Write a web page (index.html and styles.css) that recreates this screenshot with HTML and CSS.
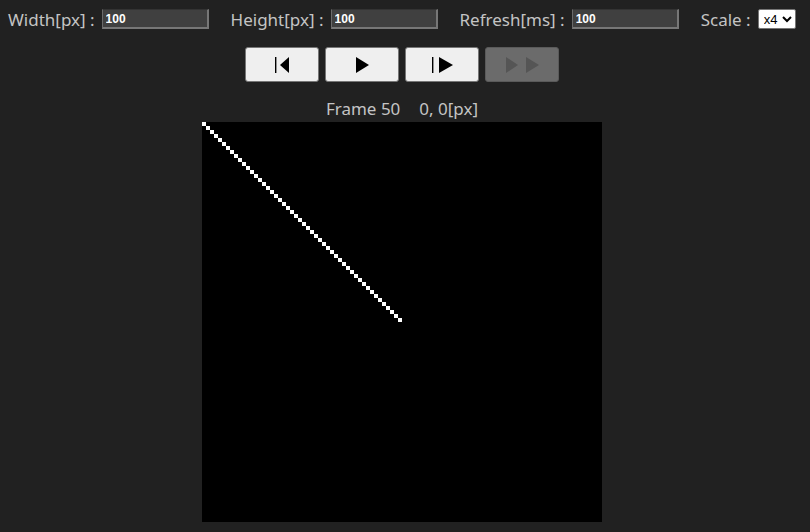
FILE: index.html
```html
<!DOCTYPE html>
<html lang="en">
<head>
    <meta charset="UTF-8">
    <meta name="viewport" content="width=device-width, initial-scale=1.0">
    <title>Frame Viewer</title>
    <link rel="stylesheet" href="styles.css">
</head>
<body>
    <div class="settings">
        <label class="field">Width[px] : <input type="text" class="num" id="width" value="100"></label>
        <label class="field">Height[px] : <input type="text" class="num" id="height" value="100"></label>
        <label class="field">Refresh[ms] : <input type="text" class="num" id="refresh" value="100"></label>
        <label class="field">Scale :
            <select id="scale" class="scale">
                <option>x1</option>
                <option>x2</option>
                <option selected>x4</option>
                <option>x8</option>
            </select>
        </label>
    </div>

    <div class="main">
        <div class="controls">
            <button class="ctrl" id="firstBtn" title="First">
                <svg width="15" height="16" viewBox="0 0 15 16"><rect x="0" y="0" width="1.4" height="16" fill="#000"/><polygon points="14,0 14,16 5,8" fill="#000"/></svg>
            </button>
            <button class="ctrl" id="playBtn" title="Play">
                <svg width="13" height="16" viewBox="0 0 13 16"><polygon points="0,0 0,16 13,8" fill="#000"/></svg>
            </button>
            <button class="ctrl" id="stepBtn" title="Step">
                <svg width="21" height="16" viewBox="0 0 21 16"><rect x="0" y="0" width="1.4" height="16" fill="#000"/><polygon points="7,0 7,16 21,8" fill="#000"/></svg>
            </button>
            <button class="ctrl" id="fastBtn" title="Fast" disabled>
                <svg width="33" height="16" viewBox="0 0 33 16"><polygon points="0,0 0,16 12,8" fill="#555"/><polygon points="20,0 20,16 33,8" fill="#555"/></svg>
            </button>
        </div>

        <div class="info"><span id="frame">Frame 50</span><span id="pos">0, 0[px]</span></div>

        <canvas id="screen" width="400" height="400"></canvas>
    </div>

    <script>
        // draw the current frame
        const canvas = document.getElementById('screen');
        const ctx = canvas.getContext('2d');
        const scale = 4;
        const frame = 50;

        ctx.fillStyle = '#000';
        ctx.fillRect(0, 0, canvas.width, canvas.height);
        ctx.fillStyle = '#fff';
        for (let i = 0; i < frame; i++) {
            ctx.fillRect(i * scale, i * scale, scale, scale);
        }
    </script>
</body>
</html>
```

FILE: styles.css
```css
/* dark frame viewer */
body {
    margin: 0;
    padding: 8px;
    background-color: #212121;
    color: #c4c4c4;
    font-family: "Noto Sans", "Open Sans", sans-serif;
    font-size: 17px;
}

.settings {
    display: flex;
    align-items: center;
    gap: 22px;
    height: 22px;
}

.field {
    display: flex;
    align-items: center;
    gap: 7px;
    white-space: nowrap;
}

.num {
    width: 101px;
    height: 17px;
    padding: 0 0 0 3px;
    margin: 0;
    background-color: #404040;
    color: #fff;
    font-family: "Liberation Sans", Arial, sans-serif;
    font-weight: bold;
    font-size: 12px;
    border: 1px solid #333;
    border-right: 2px solid #777;
    border-bottom: 2px solid #777;
    border-left: 1px solid #6a6a6a;
}

.scale {
    height: 20px;
    width: 38px;
    padding: 0 0 0 1px;
    font-family: "Liberation Sans", Arial, sans-serif;
    font-size: 13px;
    background-color: #fff;
    color: #000;
    border: 1px solid #767676;
    border-radius: 2px;
}

.main {
    display: flex;
    flex-direction: column;
    align-items: center;
    padding-right: 6px;
}

.controls {
    display: flex;
    gap: 6px;
    margin-top: 17px;
}

.ctrl {
    width: 74px;
    height: 35px;
    display: flex;
    align-items: center;
    justify-content: center;
    padding: 0;
    background-color: #efefef;
    border: 1px solid #767676;
    border-radius: 3px;
    cursor: pointer;
}

.ctrl:disabled {
    background-color: #6b6b6b;
    border-color: #5a5a5a;
    cursor: default;
}

.info {
    margin-top: 17px;
    height: 23px;
    line-height: 20px;
    display: flex;
    gap: 19px;
}

#screen {
    display: block;
    width: 400px;
    height: 400px;
    image-rendering: pixelated;
}
```
